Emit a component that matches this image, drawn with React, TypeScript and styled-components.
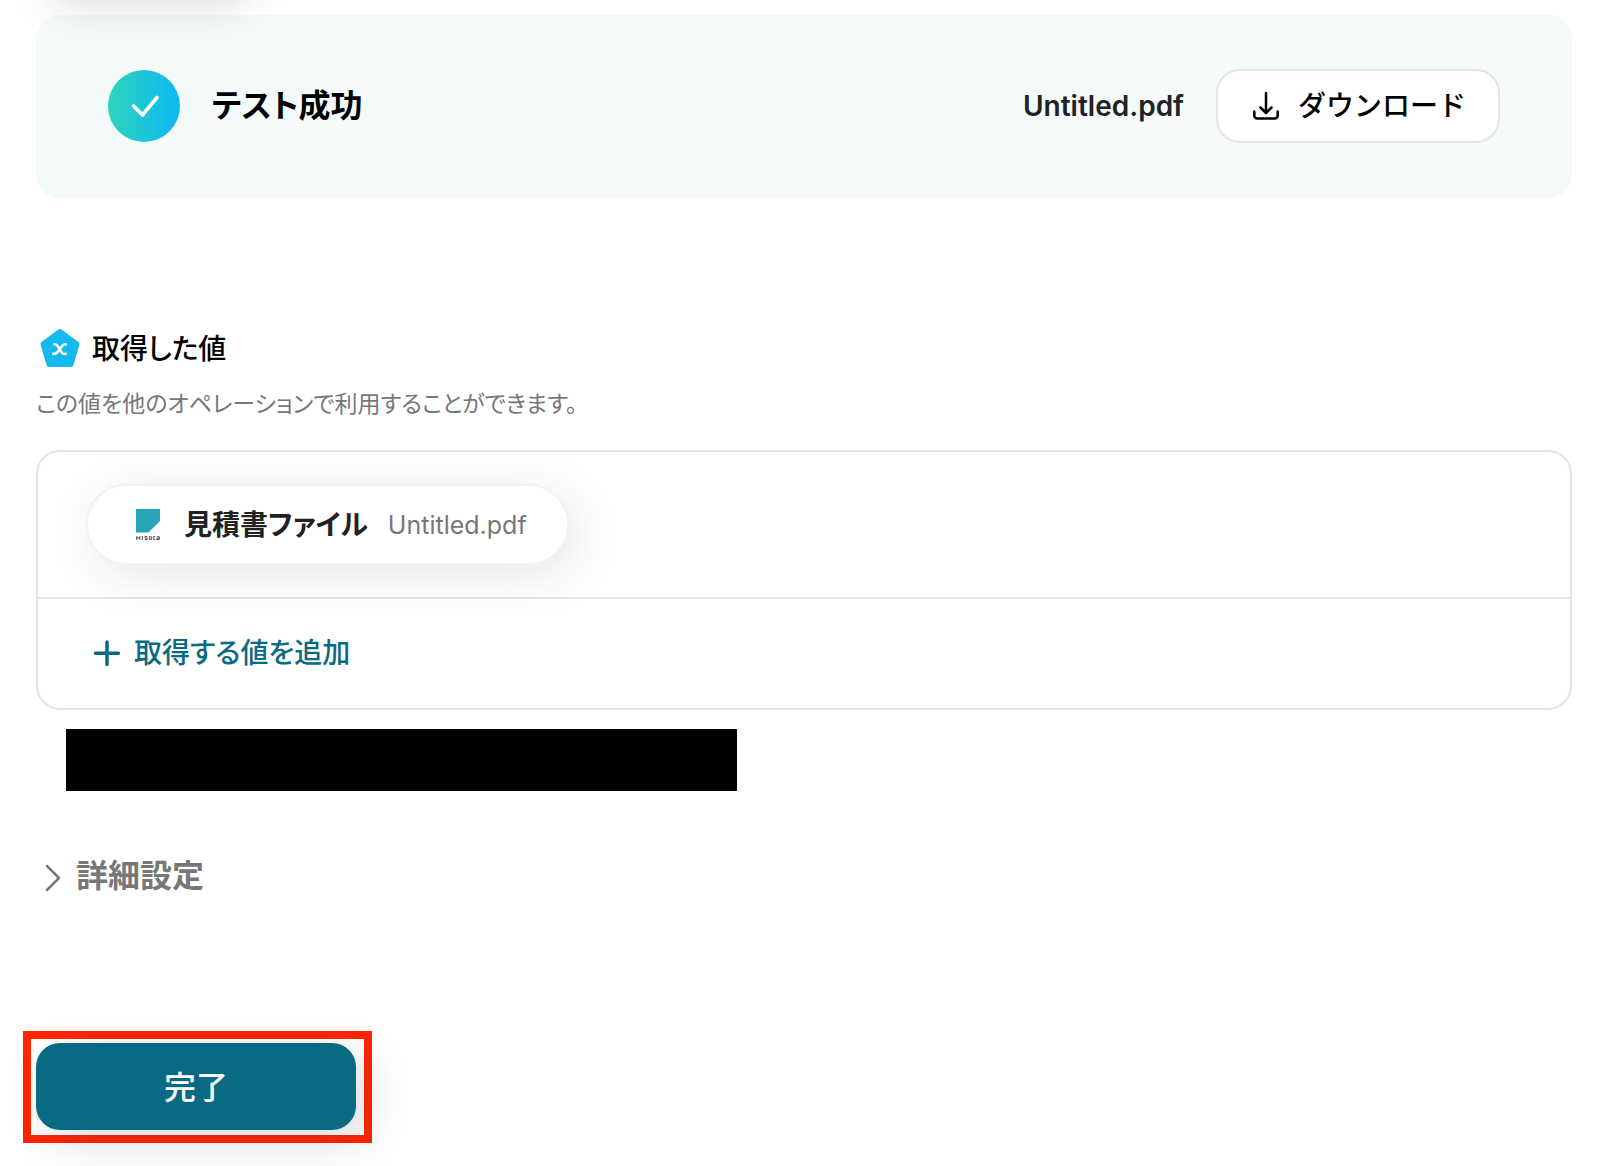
import React from "react";
import styled, { createGlobalStyle } from "styled-components";

const GlobalStyle = createGlobalStyle`
  *, *::before, *::after { box-sizing: border-box; }
  body {
    margin: 0;
    background: #fff;
    color: #000;
    font-family: Inter, "Noto Sans CJK JP", sans-serif;
    font-feature-settings: "palt";
    -webkit-font-smoothing: antialiased;
  }
  h2, p { margin: 0; }
  button { font: inherit; font-feature-settings: inherit; cursor: pointer; }
  svg { display: block; flex: none; }
`;

const softShadow = "12px 12px 40px rgba(20, 28, 50, 0.15)";

const Page = styled.main`
  display: flex;
  flex-direction: column;
  align-items: stretch;
  padding: 0 44px 24px 36px;
  overflow: hidden;
`;

const PreviousAction = styled.div`
  width: 204px;
  height: 88px;
  margin-top: -96px;
  border-radius: 24px;
  background: #096a83;
  box-shadow: ${softShadow};
`;

const ResultCard = styled.section`
  display: flex;
  align-items: center;
  gap: 32px;
  margin-top: 23px;
  padding: 54px 72px 55px;
  border-radius: 24px;
  background: rgba(9, 140, 131, 0.047);
`;

const StatusBadge = styled.span`
  display: grid;
  place-items: center;
  width: 72px;
  height: 72px;
  border-radius: 50%;
  background: linear-gradient(90deg, #2dd4bf, #0eb8f2);
`;

const ResultTitle = styled.h2`
  flex: 1;
  font-size: 32px;
  line-height: 48px;
  font-weight: 600;
`;

const FileName = styled.span`
  color: #222;
  font-size: 28px;
  line-height: 42px;
  font-weight: 600;
`;

const DownloadButton = styled.button`
  display: flex;
  align-items: center;
  gap: 16px;
  height: 74px;
  padding: 0 32px;
  border: 2px solid #e5e5e5;
  border-radius: 24px;
  background: #fff;
  color: #000;
  font-size: 28px;
  line-height: 42px;
  font-weight: 500;
  font-feature-settings: normal;
`;

const Values = styled.section`
  margin-top: 128px;
`;

const ValuesHeading = styled.div`
  display: flex;
  align-items: center;
  gap: 8px;
  height: 46px;
`;

const ValuesTitle = styled.h2`
  font-size: 28px;
  line-height: 42px;
  font-weight: 500;
`;

const Description = styled.p`
  margin-top: 14px;
  color: #777;
  font-size: 23px;
  line-height: 36px;
`;

const ValueBox = styled.div`
  margin-top: 28px;
  border: 2px solid #e5e5e5;
  border-radius: 24px;
`;

const ValueRow = styled.div`
  padding: 32px 48px;
  border-bottom: 2px solid #e5e5e5;
`;

const Chip = styled.button`
  display: flex;
  align-items: center;
  height: 81px;
  padding: 0 40px 0 48px;
  border: 2px solid #f2f2f2;
  border-radius: 40px;
  background: #fff;
  box-shadow: 8px 10px 48px rgba(0, 0, 0, 0.1);
`;

const ChipLabel = styled.span`
  margin: 0 20px 0 24px;
  color: #222;
  font-size: 28px;
  line-height: 42px;
  font-weight: 600;
`;

const ChipFile = styled.span`
  color: #777;
  font-size: 25px;
  line-height: 42px;
`;

const AddButton = styled.button`
  display: flex;
  align-items: center;
  gap: 12px;
  height: 109px;
  padding: 0 52px 2px;
  border: 0;
  background: none;
  color: #096a83;
  font-size: 28px;
  line-height: 42px;
  font-weight: 500;
`;

const Redacted = styled.div`
  width: 671px;
  max-width: 100%;
  height: 62px;
  margin: 19px 0 0 30px;
  background: #000;
`;

const DetailsToggle = styled.button`
  display: flex;
  align-items: center;
  align-self: flex-start;
  gap: 8px;
  margin-top: 61px;
  padding: 0;
  border: 0;
  background: none;
  color: #777;
  font-size: 32px;
  line-height: 48px;
  font-weight: 600;
`;

const Highlight = styled.div`
  align-self: flex-start;
  margin: 131px 0 0 -13px;
  padding: 4px 8px 5px 5px;
  border: 8px solid #ff2600;
`;

const DoneButton = styled.button`
  display: block;
  width: 320px;
  height: 87px;
  padding: 2px 0 0;
  border: 0;
  border-radius: 24px;
  background: #096a83;
  box-shadow: ${softShadow};
  color: #fff;
  font-size: 32px;
  line-height: 48px;
  font-weight: 500;
`;

const CheckIcon = () => (
  <svg width="32" height="32" viewBox="0 0 32 32" fill="none" stroke="#fff" strokeWidth="3.600" strokeLinecap="round" strokeLinejoin="round" aria-hidden="true">
    <path d="M5.500 16 14.500 25 29 7.500" />
  </svg>
);

const DownloadIcon = () => (
  <svg width="32" height="32" viewBox="0 0 32 32" fill="none" stroke="currentColor" strokeWidth="2.500" strokeLinecap="round" strokeLinejoin="round" aria-hidden="true">
    <path d="M16 3v20M10.500 17.500 16 23l5.500-5.500M4.300 21.500v4a3 3 0 0 0 3 3h17.400a3 3 0 0 0 3-3v-4" />
  </svg>
);

const VariableIcon = () => (
  <svg width="48" height="44" viewBox="0 0 48 44" aria-hidden="true">
    <path d="M23.900 4.500 41 17 35 37.500H13L7 17Z" fill="#14b9ee" stroke="#14b9ee" strokeWidth="5" strokeLinejoin="round" />
    <path d="M18.500 17.200c2.500 0 3.500 1.500 5.300 5.300s3.200 5 6 4.300M29.800 17.200c-2.600 0-4.200 1.800-6.300 5.300s-3.700 5-6.300 4.300" fill="none" stroke="#fff" strokeWidth="2.600" strokeLinecap="round" />
  </svg>
);

const MisocaLogo = () => (
  <svg width="24" height="32" viewBox="0 0 24 32" role="img" aria-label="Misoca">
    <path d="M0 0h24v12L12.500 23.500H0z" fill="#28a4b7" />
    <g fill="none" stroke="#555" strokeWidth="1">
      <path d="M.7 31v-3.500l1.600 2 1.600-2V31M6.300 27v4M11.300 27.500H9v1.600h2.200v1.500H8.600M13.200 27.700h2.200v2.800h-2.200zM19.300 27.700h-2v2.800h2M20.800 27.700h2.500v2.800h-2.400v-1.300h2.200" />
    </g>
  </svg>
);

const PlusIcon = () => (
  <svg width="32" height="32" viewBox="0 0 32 32" fill="none" stroke="currentColor" strokeWidth="3.500" strokeLinecap="round" aria-hidden="true">
    <path d="M17 5v22.500M5.500 16.300h23" />
  </svg>
);

const ChevronIcon = () => (
  <svg width="32" height="32" viewBox="0 0 32 32" fill="none" stroke="currentColor" strokeWidth="2.500" strokeLinecap="round" strokeLinejoin="round" aria-hidden="true">
    <path d="M11 6 23 18 11 30" />
  </svg>
);

export default function App() {
  return (
    <>
      <GlobalStyle />
      <Page>
        <PreviousAction />
        <ResultCard>
          <StatusBadge>
            <CheckIcon />
          </StatusBadge>
          <ResultTitle>テスト成功</ResultTitle>
          <FileName>Untitled.pdf</FileName>
          <DownloadButton type="button">
            <DownloadIcon />
            ダウンロード
          </DownloadButton>
        </ResultCard>

        <Values>
          <ValuesHeading>
            <VariableIcon />
            <ValuesTitle>取得した値</ValuesTitle>
          </ValuesHeading>
          <Description>この値を他のオペレーションで利用することができます。</Description>
          <ValueBox>
            <ValueRow>
              <Chip type="button">
                <MisocaLogo />
                <ChipLabel>見積書ファイル</ChipLabel>
                <ChipFile>Untitled.pdf</ChipFile>
              </Chip>
            </ValueRow>
            <AddButton type="button">
              <PlusIcon />
              取得する値を追加
            </AddButton>
          </ValueBox>
        </Values>

        <Redacted />

        <DetailsToggle type="button" aria-expanded="false">
          <ChevronIcon />
          詳細設定
        </DetailsToggle>

        <Highlight>
          <DoneButton type="button">完了</DoneButton>
        </Highlight>
      </Page>
    </>
  );
}
